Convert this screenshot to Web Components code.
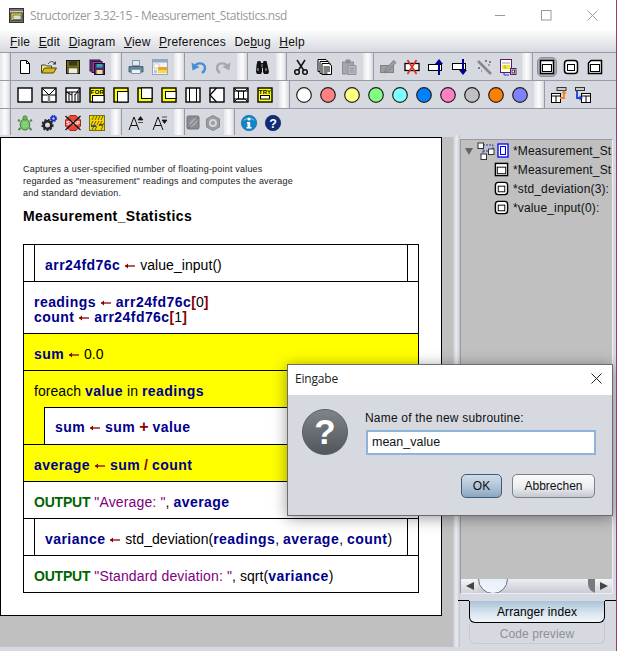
<!DOCTYPE html>
<html lang="en">
  <head>
    <meta charset="UTF-8" />
    <title>Structorizer</title>
    <style>
      html, body { margin: 0; padding: 0; background: #fff; }
    </style>
  </head>
  <body>
    <app-window>
      <title-bar>Structorizer 3.32-15 - Measurement_Statistics.nsd</title-bar>
      <menu-bar>
        <menu-item key="F" rest="ile"></menu-item>
        <menu-item key="E" rest="dit"></menu-item>
        <menu-item key="D" rest="iagram"></menu-item>
        <menu-item key="V" rest="iew"></menu-item>
        <menu-item key="P" rest="references"></menu-item>
        <menu-item pre="De" key="b" rest="ug"></menu-item>
        <menu-item key="H" rest="elp"></menu-item>
      </menu-bar>

      <tool-bar>
        <tool-group><tool-btn icon="new"></tool-btn><tool-btn icon="open"></tool-btn><tool-btn icon="save"></tool-btn><tool-btn icon="saveall"></tool-btn></tool-group>
        <tool-group><tool-btn icon="print"></tool-btn><tool-btn icon="export"></tool-btn></tool-group>
        <tool-group><tool-btn icon="undo"></tool-btn><tool-btn icon="redo"></tool-btn></tool-group>
        <tool-group><tool-btn icon="find"></tool-btn></tool-group>
        <tool-group><tool-btn icon="cut"></tool-btn><tool-btn icon="copy"></tool-btn><tool-btn icon="paste"></tool-btn></tool-group>
        <tool-group><tool-btn icon="edit"></tool-btn><tool-btn icon="del"></tool-btn><tool-btn icon="up"></tool-btn><tool-btn icon="down"></tool-btn><tool-btn icon="wand"></tool-btn><tool-btn icon="sub"></tool-btn></tool-group>
        <tool-group><tool-btn icon="main" pressed></tool-btn><tool-btn icon="routine"></tool-btn><tool-btn icon="incl"></tool-btn></tool-group>
      </tool-bar>
      <tool-bar>
        <tool-group><tool-btn icon="instr"></tool-btn><tool-btn icon="alt"></tool-btn><tool-btn icon="case"></tool-btn><tool-btn icon="for"></tool-btn><tool-btn icon="while"></tool-btn><tool-btn icon="repeat"></tool-btn><tool-btn icon="forever"></tool-btn><tool-btn icon="call"></tool-btn><tool-btn icon="jump"></tool-btn><tool-btn icon="para"></tool-btn><tool-btn icon="try"></tool-btn></tool-group>
        <tool-group><tool-btn color="#ffffff"></tool-btn><tool-btn color="#ff8080"></tool-btn><tool-btn color="#ffff80"></tool-btn><tool-btn color="#80ff80"></tool-btn><tool-btn color="#80ffff"></tool-btn><tool-btn color="#0080ff"></tool-btn><tool-btn color="#ff80c0"></tool-btn><tool-btn color="#c0c0c0"></tool-btn><tool-btn color="#ff8000"></tool-btn><tool-btn color="#8080ff"></tool-btn></tool-group>
        <tool-group><tool-btn icon="outsub"></tool-btn><tool-btn icon="insub"></tool-btn></tool-group>
      </tool-bar>
      <tool-bar last>
        <tool-group><tool-btn icon="turtle"></tool-btn><tool-btn icon="gears"></tool-btn><tool-btn icon="stop"></tool-btn><tool-btn icon="hatch"></tool-btn></tool-group>
        <tool-group><tool-btn icon="fontup"></tool-btn><tool-btn icon="fontdown"></tool-btn></tool-group>
        <tool-group narrow><tool-btn icon="leaf" small></tool-btn><tool-btn icon="hex" small></tool-btn></tool-group>
        <tool-group><tool-btn icon="info"></tool-btn><tool-btn icon="help"></tool-btn></tool-group>
      </tool-bar>

      <main-area>
        <nsd-canvas slot="left">
          <span slot="comment">Captures a user-specified number of floating-point values<br />regarded as "measurement" readings and computes the average<br />and standard deviation.</span>
          <span slot="title">Measurement_Statistics</span>

          <nsd-call><nsd-var>arr24fd76c</nsd-var> <nsd-arrow></nsd-arrow> value_input()</nsd-call>
          <nsd-row tall>
            <nsd-var>readings</nsd-var> <nsd-arrow></nsd-arrow> <nsd-var>arr24fd76c</nsd-var><nsd-op>[</nsd-op>0<nsd-op>]</nsd-op><br />
            <nsd-var>count</nsd-var> <nsd-arrow></nsd-arrow> <nsd-var>arr24fd76c</nsd-var><nsd-op>[</nsd-op>1<nsd-op>]</nsd-op>
          </nsd-row>
          <nsd-row yellow><nsd-var>sum</nsd-var> <nsd-arrow></nsd-arrow> 0.0</nsd-row>
          <nsd-loop>
            <span slot="head">foreach <nsd-var>value</nsd-var> in <nsd-var>readings</nsd-var></span>
            <nsd-row inner><nsd-var>sum</nsd-var> <nsd-arrow></nsd-arrow> <nsd-var>sum</nsd-var> <nsd-plus>+</nsd-plus> <nsd-var>value</nsd-var></nsd-row>
          </nsd-loop>
          <nsd-row yellow><nsd-var>average</nsd-var> <nsd-arrow></nsd-arrow> <nsd-var>sum</nsd-var> <nsd-op>/</nsd-op> <nsd-var>count</nsd-var></nsd-row>
          <nsd-row><nsd-kw>OUTPUT</nsd-kw> <nsd-str>"Average: "</nsd-str>, <nsd-var>average</nsd-var></nsd-row>
          <nsd-call><nsd-var>variance</nsd-var> <nsd-arrow></nsd-arrow> std_deviation(<nsd-var>readings</nsd-var>, <nsd-var>average</nsd-var>, <nsd-var>count</nsd-var>)</nsd-call>
          <nsd-row last><nsd-kw>OUTPUT</nsd-kw> <nsd-str>"Standard deviation: "</nsd-str>, sqrt(<nsd-var>variance</nsd-var>)</nsd-row>
        </nsd-canvas>

        <side-panel slot="right">
          <tree-row icon="main" blue expand>*Measurement_St</tree-row>
          <tree-row icon="main">*Measurement_St</tree-row>
          <tree-row icon="routine">*std_deviation(3):</tree-row>
          <tree-row icon="routine">*value_input(0):</tree-row>
        </side-panel>
      </main-area>

      <input-dialog></input-dialog>
    </app-window>

    <script>
      const frame = '<rect x="1" y="1" width="14" height="14" fill="#fff" stroke="#000" stroke-width="1.4"/>';
      const ICONS = {
        new: '<path d="M3.5 1.5h6l3 3v10h-9z" fill="#fff" stroke="#000"/><path d="M9.5 1.5v3h3" fill="none" stroke="#000"/>',
        open: '<path d="M.5 14V6h4l1 1h5v2" fill="#f4e878" stroke="#444"/><path d="M.5 14l3-5h12l-3 5z" fill="#d8b820" stroke="#504800"/><path d="M7 5c2-3 5-3 6.500-1" stroke="#444" fill="none"/><path d="M15 2v3.500h-3.500z" fill="#444"/>',
        save: '<rect x="1.500" y="1.500" width="13" height="13" fill="#6e6e14" stroke="#111"/><rect x="4" y="1.500" width="8" height="5" fill="#39391a"/><rect x="3.500" y="9" width="9" height="5.500" fill="#efeeda" stroke="#333" stroke-width=".5"/>',
        saveall: '<rect x="1" y="1" width="10" height="11" fill="#7a3c8c" stroke="#301040"/><rect x="3" y="2.500" width="10" height="11" fill="#8a4a9c" stroke="#301040"/><rect x="5.500" y="4.500" width="10" height="11" fill="#5c2468" stroke="#200830"/><rect x="7.500" y="11" width="6" height="4" fill="#e8e0a0"/><rect x="7.500" y="5" width="6" height="3.500" fill="#26b0b0"/>',
        print: '<rect x="4.500" y="1.500" width="7" height="5" fill="#dcecf4" stroke="#8898a8"/><path d="M1 7.500h14v5.500h-14z" fill="#64849c" stroke="#4c6478"/><rect x="3.500" y="10.500" width="9" height="4" fill="#e8f0f4" stroke="#8898a8"/>',
        export: '<rect x=".5" y=".5" width="15" height="15" fill="#eef2f6" stroke="#9aa4b4"/><rect x="1" y="1" width="14" height="2.500" fill="#88acd0"/><rect x="2" y="5" width="5" height="4" fill="#fff" stroke="#c8b080" stroke-width=".6"/><rect x="6" y="8" width="9" height="3" fill="#f0a030"/><rect x="6" y="11" width="9" height="3" fill="#f4dc40"/><rect x="2" y="11" width="3" height="3" fill="#b0c8dc"/>',
        undo: '<path d="M3.500 8c2-5 10-5 10.500 1 0 2.500-1.500 4-3 5" stroke="#4a8cd8" stroke-width="2.400" fill="none"/><path d="M.5 3.500l1 8 7-3.500z" fill="#4a8cd8"/>',
        redo: '<g transform="matrix(-1 0 0 1 16 0)"><path d="M3.500 8c2-5 10-5 10.500 1 0 2.500-1.500 4-3 5" stroke="#a4a8ae" stroke-width="2.400" fill="none"/><path d="M.5 3.500l1 8 7-3.500z" fill="#a4a8ae"/></g>',
        find: '<path d="M2.500 6l1-4h3l.5 2h2l.5-2h3l1 4 1.500 7-1 2h-4l-1-2v-4h-1v4l-1 2h-4l-1-2z" fill="#111"/><rect x="7" y="5" width="2" height="3.500" fill="#555"/><rect x="3" y="9" width="2" height="3" fill="#666"/><rect x="11" y="9" width="2" height="3" fill="#666"/>',
        cut: '<path d="M4 1l6.500 10M12 1L5.500 11" stroke="#111" stroke-width="1.500" fill="none"/><circle cx="4" cy="13" r="2.300" fill="none" stroke="#111" stroke-width="1.500"/><circle cx="12" cy="13" r="2.300" fill="none" stroke="#111" stroke-width="1.500"/>',
        copy: '<path d="M1 .5h8l2 2v10H1z" fill="#fff" stroke="#000"/><path d="M3 2.500h8l2 2v10H3z" fill="#fff" stroke="#000"/><path d="M5 4.500h7l2.500 2v9H5z" fill="#fff" stroke="#000"/><path d="M6.500 8h6.500M6.500 10h6.500M6.500 12h6.500M6.500 14h4" stroke="#000" stroke-width="1"/>',
        paste: '<path d="M1.500 3h11v12h-11z" fill="#a4a8ac" stroke="#8c9094"/><rect x="4.500" y=".5" width="5" height="4" rx="1" fill="#8c9094"/><path d="M7 6.500h8v9H7z" fill="#bcc0c4" stroke="#8c9094"/><path d="M8.500 9h5M8.500 11h5M8.500 13h5" stroke="#8c9094"/>',
        edit: '<rect x=".5" y="6.500" width="13" height="7" fill="#9a9ca0" stroke="#808286"/><path d="M4 14l2-4 7.500-8.500 2.500 2L8 12z" fill="#9a9ca0" stroke="#808286"/>',
        del: '<rect x="1" y="4.500" width="14" height="7" fill="#fff" stroke="#000" stroke-width="1.300"/><path d="M3.500 1l9 14M12.500 1l-9 14" stroke="#e03020" stroke-width="1.700"/>',
        up: '<rect x=".5" y="5.500" width="13" height="6" fill="#fff" stroke="#000"/><path d="M11 16V4" stroke="#00008b" stroke-width="2"/><path d="M7 5l4-5 4 5z" fill="#00008b"/>',
        down: '<rect x=".5" y="4.500" width="13" height="6" fill="#fff" stroke="#000"/><path d="M11 0v12" stroke="#00008b" stroke-width="2"/><path d="M7 11l4 5 4-5z" fill="#00008b"/>',
        wand: '<path d="M2 2l13 13" stroke="#85888c" stroke-width="2.600"/><path d="M9 2h2M10 1v2M13 3h2M14 2v2M12 6h2M2 9h2M3 8v2M5 12h1" stroke="#55585c" stroke-width=".9"/>',
        sub: '<rect x=".5" y=".5" width="11" height="13" fill="#fff" stroke="#601868"/><rect x="2" y="3" width="8" height="2" fill="#c8d0d8"/><rect x="2" y="6" width="8" height="4" fill="#f4e820"/><path d="M5 6v4" stroke="#666" stroke-width=".5"/><path d="M4 14v2h5" stroke="#2040d0" fill="none"/><rect x="10.500" y="9.500" width="5.500" height="6" fill="#fff" stroke="#601868"/><rect x="12" y="11" width="2.500" height="3" fill="none" stroke="#333"/>',
        main: '<rect x="1.500" y="1.500" width="13" height="13" fill="#fff" stroke="#000" stroke-width="1.500"/><rect x="3.500" y="5.500" width="9" height="7" fill="#fff" stroke="#000"/>',
        routine: '<rect x="1.500" y="1.500" width="13" height="13" rx="3" fill="#fff" stroke="#000" stroke-width="1.500"/><rect x="4.500" y="5.500" width="7" height="6" fill="#fff" stroke="#000"/>',
        incl: '<path d="M4 1.500h10.500v13H1.500V4z" fill="#fff" stroke="#000" stroke-width="1.500"/><rect x="3.500" y="5.500" width="9" height="7" fill="#fff" stroke="#000"/>',
        instr: frame,
        alt: frame + '<path d="M1 1l7 7 7-7M1 8h14" fill="none" stroke="#000"/><path d="M8 8v7" stroke="#888" stroke-width="2.400"/>',
        case: frame + '<path d="M1 5h14M1 5l6 3M4 5v10M7 5v10M10 7v8M13 5v10" fill="none" stroke="#000"/><path d="M15 1l-5 7" stroke="#000"/>',
        for: '<rect x="1" y="1" width="14" height="14" fill="#ffff00" stroke="#000" stroke-width="1.400"/><rect x="3.500" y="8.500" width="11.500" height="6.500" fill="#fff" stroke="#000"/><text x="8.500" y="7" text-anchor="middle" font-family="Liberation Sans" font-weight="bold" font-size="6" letter-spacing=".2">FOR</text>',
        while: '<rect x="1" y="1" width="14" height="14" fill="#ffff00" stroke="#000" stroke-width="1.400"/><rect x="4.500" y="4.500" width="10.500" height="10.500" fill="#fff" stroke="#000"/>',
        repeat: '<rect x="1" y="1" width="14" height="14" fill="#ffff00" stroke="#000" stroke-width="1.400"/><rect x="4.500" y="1" width="10.500" height="10.500" fill="#fff" stroke="#000"/>',
        forever: '<rect x="1" y="1" width="14" height="14" fill="#ffff00" stroke="#000" stroke-width="1.400"/><rect x="4.500" y="4.500" width="10.500" height="7" fill="#fff" stroke="#000"/>',
        call: frame + '<path d="M4.500 1v14M11.500 1v14" stroke="#000"/>',
        jump: frame + '<path d="M7.500 1L1 8l6.500 7" fill="none" stroke="#000" stroke-width="1.200"/>',
        para: frame + '<path d="M1 1l3 3h8l3-3M1 15l3-3h8l3 3M1 4h14M1 12h14M5.500 4v8M10.500 4v8" fill="none" stroke="#000"/>',
        try: '<rect x="1" y="1" width="14" height="14" fill="#ffff00" stroke="#000" stroke-width="1.400"/><rect x="3.500" y="8.500" width="9" height="3.500" fill="#fff" stroke="#000"/><text x="8" y="7" text-anchor="middle" font-family="Liberation Sans" font-weight="bold" font-size="6" letter-spacing=".2">TRY</text>',
        outsub: '<rect x="6" y=".5" width="9" height="3" fill="#ccc" stroke="#333"/><rect x=".5" y="6.500" width="9" height="9" fill="#fff" stroke="#000"/><path d="M.5 9h9M5 9v6.500" stroke="#000"/><path d="M9 11h4V6" fill="none" stroke="#f08020" stroke-width="1.800"/><path d="M10.500 6.500L13 3l2.500 3.500z" fill="#f08020"/>',
        insub: '<rect x=".5" y=".5" width="9" height="3" fill="#ccc" stroke="#333"/><rect x="6.500" y="6.500" width="9" height="9" fill="#fff" stroke="#000"/><path d="M6.500 9h9M11 9v6.500" stroke="#000"/><path d="M2 4v7h3" fill="none" stroke="#2040d0" stroke-width="1.800"/><path d="M4.500 8.500L8 11l-3.500 2.500z" fill="#2040d0"/>',
        turtle: '<ellipse cx="8" cy="9.500" rx="4.800" ry="5.500" fill="#78c868" stroke="#407838"/><circle cx="8" cy="3" r="2.200" fill="#68b858" stroke="#407838" stroke-width=".7"/><path d="M3 6L1 5M13 6l2-1M3.500 13L1.500 15M12.500 13l2 2" stroke="#508848" stroke-width="2"/><path d="M6 8h4M5.500 11h5" stroke="#a0e090" stroke-width="1.200"/>',
        gears: '<circle cx="6.500" cy="10" r="3.800" fill="none" stroke="#222" stroke-width="2.600"/><circle cx="6.500" cy="10" r="5.400" fill="none" stroke="#222" stroke-width="1.400" stroke-dasharray="2 1.600"/><circle cx="12.500" cy="3.500" r="2" fill="none" stroke="#1028d0" stroke-width="1.600"/><circle cx="12.500" cy="3.500" r="3.200" fill="none" stroke="#1028d0" stroke-width="1" stroke-dasharray="1.500 1"/>',
        stop: '<path d="M5 .5h6L15.500 5v6L11 15.500H5L.5 11V5z" fill="#e84838" stroke="#a02818"/><text x="8" y="10" text-anchor="middle" font-family="Liberation Sans" font-size="5" font-weight="bold" fill="#fff">STOP</text><path d="M.5 1l15 14M15.500 1L.5 15" stroke="#111" stroke-width="1.200"/>',
        hatch: '<rect x=".5" y=".5" width="15" height="15" fill="#f0d800" stroke="#707020"/><path d="M3 5l2-4M6 5l2-4M9 5l2-4M12 5l2-4M2 10l2-4M5 10l2-4M8 10l2-4M11 10l2-4M14 10l1-2M3 15l2-4M6 15l2-4M12 15l2-4" stroke="#705800" stroke-width="1"/><path d="M2 11h5" stroke="#1818c0" stroke-width="1.500"/><path d="M10 10h4" stroke="#333" stroke-width="1.500"/>',
        fontup: '<path d="M1 15L6 2l5 13M3 10.500h6" fill="none" stroke="#111" stroke-width="1"/><path d="M10 5l2.500-3.500L15 5zM10 7.500h5" fill="#111" stroke="#111" stroke-width=".7"/>',
        fontdown: '<path d="M1 15L6 2l5 13M3 10.500h6" fill="none" stroke="#111" stroke-width="1"/><path d="M10 5l2.500 3.500L15 5zM10 2h5" fill="#111" stroke="#111" stroke-width=".7"/>',
        leaf: '<rect x="1" y="1" width="12" height="13" rx="1.500" fill="#8a8c90" stroke="#74767a"/><path d="M3 12c0-6 4-9 9-9-1 6-4 9-9 9z" fill="#a8aaae"/><path d="M1 14L13 2" stroke="#6c6e72"/>',
        hex: '<path d="M7 .5l6.500 3.500v8L7 15.500.5 12V4z" fill="#9c9ea2" stroke="#84868a"/><circle cx="7" cy="8" r="3" fill="none" stroke="#d4d6da" stroke-width="1.800"/>',
        info: '<circle cx="8" cy="8" r="7.700" fill="#1486c8" stroke="#0c5c98" stroke-width=".6"/><path d="M2 6a6.500 5 0 0 1 12 0 8 6 0 0 0-12 0z" fill="#8ccbec"/><circle cx="8" cy="4" r="1.500" fill="#fff"/><path d="M6 7h3.200v5H10.500v1.500h-5V12h1V8.500H6z" fill="#fff"/>',
        help: '<circle cx="8" cy="8" r="7.700" fill="#102c78" stroke="#081c58" stroke-width=".6"/><text x="8" y="12.500" text-anchor="middle" font-family="Liberation Sans" font-weight="bold" font-size="12.500" fill="#fff">?</text>',
      };

      class AppWindow extends HTMLElement {
        constructor() {
          super();
          this.attachShadow({ mode: "open" }).innerHTML = `
            <style>
              :host { display: flex; flex-direction: column; position: relative; width: 617px; height: 651px; overflow: hidden;
                box-sizing: border-box; border-right: 1px solid #a03a70; background: #d6d9e0; font-family: "Liberation Sans", Arial, sans-serif; color: #000; }
            </style>
            <slot></slot>`;
        }
      }

      class TitleBar extends HTMLElement {
        constructor() {
          super();
          this.attachShadow({ mode: "open" }).innerHTML = `
            <style>
              :host { display: flex; align-items: center; height: 30px; flex: none; background: #fff; position: relative;
                font: 12px "Open Sans", "Noto Sans", sans-serif; letter-spacing: -.4px; color: #999; }
              svg.logo { margin: 0 6px 0 9px; }
              .ctl { margin-left: auto; display: flex; padding-right: 18px; gap: 35px; }
            </style>
            <svg class="logo" width="15" height="15" viewBox="0 0 15 15">
              <rect x=".5" y=".5" width="14" height="14" fill="#777" stroke="#333"/>
              <rect x="1" y="3" width="13" height="1.500" fill="#ccc"/>
              <rect x="2" y="5" width="11" height="7.500" fill="#f4e820" stroke="#222" stroke-width=".7"/>
              <rect x="4" y="7" width="8" height="4.500" fill="#ddd" stroke="#333" stroke-width=".6"/>
            </svg>
            <span><slot></slot></span>
            <div class="ctl">
              <svg width="11" height="11" viewBox="0 0 11 11"><path d="M0 5.500h10" stroke="#999"/></svg>
              <svg width="11" height="11" viewBox="0 0 11 11"><rect x=".5" y=".5" width="9.500" height="9.500" fill="none" stroke="#999"/></svg>
              <svg width="11" height="11" viewBox="0 0 11 11"><path d="M.5.5l10 10M10.500.5l-10 10" stroke="#999"/></svg>
            </div>`;
        }
      }

      class MenuBar extends HTMLElement {
        constructor() {
          super();
          this.attachShadow({ mode: "open" }).innerHTML = `
            <style>
              :host { display: flex; height: 22px; flex: none; box-sizing: border-box; padding: 5px 0 0 10px; gap: 8.500px;
                background: linear-gradient(#fdfdfd, #d6d9e0); font: 12px "Liberation Sans", sans-serif; letter-spacing: .2px; }
            </style>
            <slot></slot>`;
        }
      }

      class MenuItem extends HTMLElement {
        constructor() {
          super();
          const pre = this.getAttribute("pre") || "";
          this.attachShadow({ mode: "open" }).innerHTML = `
            <style>:host { display: block; color: #111; } u { text-underline-offset: 1px; }</style>
            ${pre}<u>${this.getAttribute("key")}</u>${this.getAttribute("rest")}`;
        }
      }

      class ToolBar extends HTMLElement {
        constructor() {
          super();
          this.attachShadow({ mode: "open" }).innerHTML = `
            <style>
              :host { display: flex; flex: none; height: 28px; box-sizing: border-box; border-top: 1px solid #9a9aa6; }
              :host([last]) { height: 27px; border-bottom: 0; }
            </style>
            <slot></slot>`;
        }
      }

      class ToolGroup extends HTMLElement {
        constructor() {
          super();
          this.attachShadow({ mode: "open" }).innerHTML = `
            <style>
              :host { display: flex; flex: none; height: 100%; }
              .grip { width: 10px; flex: none; border-right: 1px solid #9a9aa6;
                background: linear-gradient(90deg, #e4e5e9, #fbfbfc 45%, #f2f2f4 70%, #d2d5dc); }
              .btns { display: flex; padding: 0 2px; }
              :host([narrow]) .btns { padding: 0 0 0 0; margin-left: -1px; }
            </style>
            <div class="grip"></div>
            <div class="btns"><slot></slot></div>`;
        }
      }

      class ToolBtn extends HTMLElement {
        constructor() {
          super();
          const color = this.getAttribute("color");
          const art = color
            ? `<circle cx="8" cy="8" r="7.300" fill="${color}" stroke="#222" stroke-width="1.200"/>`
            : ICONS[this.getAttribute("icon")];
          this.attachShadow({ mode: "open" }).innerHTML = `
            <style>
              :host { display: flex; align-items: center; justify-content: center; width: 24px; height: 27px; flex: none; }
              :host([small]) { width: 20px; }
              :host([pressed]) .box { background: #a9acb4; border: 1px solid #8e9098; border-radius: 5px; padding: 1px; }
              .box { display: flex; padding: 2px; }
              svg { width: 16px; height: 16px; overflow: visible; }
            </style>
            <div class="box"><svg viewBox="0 0 16 16">${art}</svg></div>`;
        }
      }

      class MainArea extends HTMLElement {
        constructor() {
          super();
          this.attachShadow({ mode: "open" }).innerHTML = `
            <style>
              :host { display: flex; flex: none; height: 512px; }
              .left { width: 453px; flex: none; box-sizing: border-box; padding-top: 2px; }
              .left-in { height: 100%; background: #c0c0c0; }
              .split { width: 7px; flex: none; background: linear-gradient(90deg, #c6c8d0, #e6e7ec 40%, #e6e7ec 60%, #bfc2cc); }
              .right { flex: 1; min-width: 0; }
            </style>
            <div class="left"><div class="left-in"><slot name="left"></slot></div></div>
            <div class="split"></div>
            <div class="right"><slot name="right"></slot></div>`;
        }
      }

      class NsdCanvas extends HTMLElement {
        constructor() {
          super();
          this.attachShadow({ mode: "open" }).innerHTML = `
            <style>
              :host { display: block; width: 442px; height: 479px; box-sizing: border-box; background: #fff;
                border: 1px solid #000; padding: 25px 0 0 22px; font-family: "Liberation Sans", sans-serif; }
              .comment { height: 45px; font-size: 9px; line-height: 12px; color: #222; letter-spacing: .2px; }
              .title { height: 36px; font-size: 14px; line-height: 17px; font-weight: bold; letter-spacing: .4px; }
              .diagram { width: 396px; display: flex; flex-direction: column; box-sizing: border-box; }
            </style>
            <div class="comment"><slot name="comment"></slot></div>
            <div class="title"><slot name="title"></slot></div>
            <div class="diagram"><slot></slot></div>`;
        }
      }

      const rowFont = `font-size: 14px; line-height: 15px; letter-spacing: .05px;`;

      class NsdRow extends HTMLElement {
        constructor() {
          super();
          this.attachShadow({ mode: "open" }).innerHTML = `
            <style>
              :host { display: block; box-sizing: border-box; height: 37px; border: 1px solid #000; border-bottom: 0;
                padding: 13px 0 0 10px; background: #fff; white-space: nowrap; ${rowFont} }
              :host([tall]) { height: 52px; }
              :host([yellow]) { background: #ffff00; }
              :host([last]) { height: 38px; border-bottom: 1px solid #000; }
              :host([inner]) { border-right: 0; padding-top: 12px; }
            </style>
            <slot></slot>`;
        }
      }

      class NsdCall extends HTMLElement {
        constructor() {
          super();
          this.attachShadow({ mode: "open" }).innerHTML = `
            <style>
              :host { display: flex; box-sizing: border-box; height: 37px; border: 1px solid #000; border-bottom: 0; background: #fff; white-space: nowrap; ${rowFont} }
              .in { flex: 1; margin-left: 10px; border-left: 1px solid #000; border-right: 1px solid #000; margin-right: 10px; padding: 13px 0 0 10px; }
            </style>
            <div class="in"><slot></slot></div>`;
        }
      }

      class NsdLoop extends HTMLElement {
        constructor() {
          super();
          this.attachShadow({ mode: "open" }).innerHTML = `
            <style>
              :host { display: block; box-sizing: border-box; height: 74px; border: 1px solid #000; border-width: 1px 1px 0 1px; background: #ffff00; white-space: nowrap; ${rowFont} }
              .head { height: 36px; box-sizing: border-box; padding: 13px 0 0 10px; }
              .body { padding-left: 20px; }
            </style>
            <div class="head"><slot name="head"></slot></div>
            <div class="body"><slot></slot></div>`;
        }
      }

      const token = (name, css) =>
        customElements.define(name, class extends HTMLElement {
          constructor() {
            super();
            this.attachShadow({ mode: "open" }).innerHTML = `<style>:host { ${css} }</style><slot></slot>`;
          }
        });
      token("nsd-var", "color: #00008b; font-weight: bold; letter-spacing: .45px;");
      token("nsd-op", "color: #8b0000; font-weight: bold;");
      token("nsd-plus", "color: #8b0000; font-weight: bold; font-size: 16px; line-height: 0;");
      token("nsd-kw", "color: #006400; font-weight: bold; letter-spacing: -.2px;");
      token("nsd-str", "color: #800080; letter-spacing: .15px;");

      class NsdArrow extends HTMLElement {
        constructor() {
          super();
          this.attachShadow({ mode: "open" }).innerHTML = `
            <style>:host { display: inline-block; width: 10px; margin: 0 1px; vertical-align: 1px; }</style>
            <svg width="10" height="6" viewBox="0 0 10 6" style="display:block"><path d="M0 3h10" stroke="#8b0000" stroke-width="1.300"/><path d="M0 3l3-2.500v5z" fill="#8b0000"/></svg>`;
        }
      }

      class SidePanel extends HTMLElement {
        constructor() {
          super();
          this.attachShadow({ mode: "open" }).innerHTML = `
            <style>
              :host { display: flex; flex-direction: column; height: 512px; box-sizing: border-box; padding: 4px 3px 0 0; }
              .view { height: 455px; flex: none; box-sizing: border-box; border: 1px solid #9a9aa6; border-right-color: #eef; border-bottom-color: #eef; background: #c0c0c0; display: flex; flex-direction: column; overflow: hidden; }
              .list { flex: 1; padding-top: 1px; overflow: hidden; }
              .scroll { height: 14px; flex: none; display: flex; position: relative; background: linear-gradient(#eceef2, #c8cad0); overflow: hidden; }
              .arrow { width: 17px; flex: none; display: flex; align-items: center; justify-content: center; background: linear-gradient(#f4f5f7, #d0d2d8); }
              .thumb { position: absolute; left: 17px; top: -15px; width: 28px; height: 28px; border-radius: 50%; border: 1px solid #5f7285; background: linear-gradient(#9ab, #e6eef6 50%, #f4f8fb); }
              .end { position: absolute; right: 15px; top: 0; width: 9px; height: 14px; background: #787a80; border-radius: 0 0 0 9px; }
              .sp { flex: 1; }
              .tabs { margin-left: -2px; margin-right: -3px; flex: 1; }
              .line { display: flex; height: 7px; }
              .line i { display: block; height: 0; border-top: 1px solid #000; margin-top: 6px; }
              .tab { margin: 0 11px; height: 22px; box-sizing: border-box; text-align: center; font-size: 12px; line-height: 23px; letter-spacing: .1px; }
              .tab.on { border: 1px solid #000; border-top: 0; border-radius: 0 0 6px 6px; background: linear-gradient(#a9c2d8, #d8e4ee 55%, #f2f6f9); color: #000; }
              .tab.off { height: 21px; line-height: 22px; border: 1px solid #c6c8d0; border-top: 0; border-radius: 0 0 6px 6px; color: #8e9096; }
            </style>
            <div class="view">
              <div class="list"><slot></slot></div>
              <div class="scroll">
                <div class="arrow"><svg width="8" height="8"><path d="M0 4l8-4v8z" fill="#444"/></svg></div>
                <div class="sp"></div>
                <div class="thumb"></div>
                <div class="end"></div>
                <div class="arrow" style="position:relative"><svg width="8" height="8"><path d="M8 4L0 0v8z" fill="#444"/></svg></div>
              </div>
            </div>
            <div class="tabs">
              <div class="line"><i style="width:11px"></i><span style="flex:1"></span><i style="width:11px"></i></div>
              <div class="tab on">Arranger index</div>
              <div class="tab off">Code preview</div>
            </div>`;
        }
      }

      class TreeRow extends HTMLElement {
        constructor() {
          super();
          const blue = this.hasAttribute("blue");
          const expand = this.hasAttribute("expand");
          const icon = blue
            ? `<rect x="1" y=".5" width="10" height="13" fill="#fff" stroke="#0000ff" stroke-width="1.300"/><rect x="3.500" y="3" width="5" height="8" fill="#fff" stroke="#0000ff"/>`
            : ICONS[this.getAttribute("icon")];
          const vb = blue ? "0 0 12 14" : "0 0 16 16";
          this.attachShadow({ mode: "open" }).innerHTML = `
            <style>
              :host { display: grid; grid-template-columns: 13px 16px 15px 1fr; height: 19px; align-items: center;
                font-size: 12px; letter-spacing: .15px; white-space: nowrap; color: #111; padding-left: 4px; }
              svg { display: block; }
              .txt { padding-left: 4px; }
              .ic.blue { margin-left: 3px; }
            </style>
            <div>${expand ? '<svg width="8" height="8"><path d="M0 1h8L4 8z" fill="#666"/></svg>' : ""}</div>
            <div>${expand ? `<svg width="18" height="18" viewBox="0 0 18 18" style="margin-left:-1px"><path d="M6 3h10v6M6 6v8M11 9h-5" fill="none" stroke="#2030d0" stroke-dasharray="2 1"/><rect x="1" y="1" width="5.500" height="5.500" fill="#fff" stroke="#333"/><rect x="11.500" y="7" width="5.500" height="5.500" fill="#fff" stroke="#333"/><rect x="4" y="12" width="5.500" height="5.500" fill="#fff" stroke="#333"/></svg>` : ""}</div>
            <svg class="ic ${blue ? "blue" : ""}" width="${blue ? 12 : 15}" height="15" viewBox="${vb}">${icon}</svg>
            <div class="txt"><slot></slot></div>`;
        }
      }

      class InputDialog extends HTMLElement {
        constructor() {
          super();
          this.attachShadow({ mode: "open" }).innerHTML = `
            <style>
              :host { display: flex; flex-direction: column; position: absolute; left: 287px; top: 364px; width: 326px; height: 152px; box-sizing: border-box;
                border: 1px solid #6c6c6c; background: #d6d9e0; box-shadow: 0 2px 14px rgba(0, 0, 0, .4); font-family: "Liberation Sans", sans-serif; color: #111; }
              .head { height: 30px; flex: none; box-sizing: border-box; padding: 0 10px 3px 7px; background: #fff; display: flex; align-items: center; justify-content: space-between;
                font: 12px "Open Sans", "Noto Sans", sans-serif; letter-spacing: -.2px; color: #222; }
              .body { flex: 1; display: flex; padding: 14px 16px 0 14px; }
              .q { width: 46px; height: 46px; flex: none; border-radius: 50%; box-sizing: border-box; border: 1px solid #565b62;
                background: linear-gradient(#7f848a, #50565c); color: #fff; font: bold 35px/44px "Liberation Sans", sans-serif; text-align: center; }
              .col { flex: 1; margin-left: 17px; display: flex; flex-direction: column; }
              .lbl { font-size: 12px; line-height: 16px; letter-spacing: .2px; margin-top: 1px; }
              .inp { height: 25px; box-sizing: border-box; margin: 4px 0 0 1px; border: 2px solid #8fb4d8; background: #fff; padding-left: 4px; font-size: 12.500px; line-height: 21px; }
              .btns { display: flex; justify-content: flex-end; gap: 10px; margin: 19px 1px 0 0; }
              .b { height: 24px; box-sizing: border-box; border: 1px solid #7c8088; border-radius: 5px; text-align: center; font-size: 12px; line-height: 22px;
                background: linear-gradient(#fbfbfc, #eceef2 55%, #c4c7ce); }
              .ok { width: 41px; border-color: #3f5a78; background: linear-gradient(#d0dde9, #aec3d6 55%, #8ba6c0); }
              .cancel { width: 83px; }
            </style>
            <div class="head"><span>Eingabe</span>
              <svg width="11" height="11" viewBox="0 0 11 11"><path d="M.5.5l10 10M10.500.5l-10 10" stroke="#222"/></svg>
            </div>
            <div class="body">
              <div class="q">?</div>
              <div class="col">
                <div class="lbl">Name of the new subroutine:</div>
                <div class="inp">mean_value</div>
                <div class="btns"><div class="b ok">OK</div><div class="b cancel">Abbrechen</div></div>
              </div>
            </div>`;
        }
      }

      customElements.define("app-window", AppWindow);
      customElements.define("title-bar", TitleBar);
      customElements.define("menu-bar", MenuBar);
      customElements.define("menu-item", MenuItem);
      customElements.define("tool-bar", ToolBar);
      customElements.define("tool-group", ToolGroup);
      customElements.define("tool-btn", ToolBtn);
      customElements.define("main-area", MainArea);
      customElements.define("nsd-canvas", NsdCanvas);
      customElements.define("nsd-row", NsdRow);
      customElements.define("nsd-call", NsdCall);
      customElements.define("nsd-loop", NsdLoop);
      customElements.define("nsd-arrow", NsdArrow);
      customElements.define("side-panel", SidePanel);
      customElements.define("tree-row", TreeRow);
      customElements.define("input-dialog", InputDialog);
    </script>
  </body>
</html>
